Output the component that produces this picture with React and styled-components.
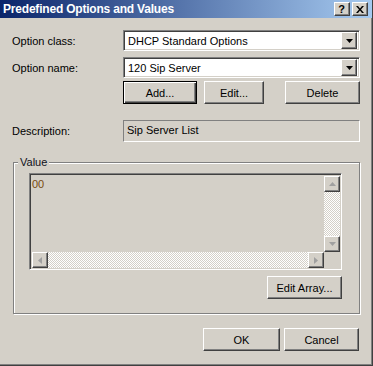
import React from 'react'
import styled, { createGlobalStyle } from 'styled-components'

const GlobalStyle = createGlobalStyle`
    html, body {
        margin: 0;
        padding: 0;
        background: #d4d0c8;
    }
    * {
        box-sizing: border-box;
    }
`

const App = () => {
    return (
        <Window>
            <GlobalStyle />
            <TitleBar>
                <Title>Predefined Options and Values</Title>
                <CaptionButtons>
                    <CaptionButton>?</CaptionButton>
                    <CaptionButton>
                        <svg width="8" height="7" viewBox="0 0 8 7">
                            <path d="M0 0h2l2 2.5L6 0h2L5 3.5 8 7H6L4 4.5 2 7H0l3-3.5z" fill="#000" />
                        </svg>
                    </CaptionButton>
                </CaptionButtons>
            </TitleBar>
            <Body>
                <Form>
                    <Label>Option class:</Label>
                    <Combo>
                        <ComboText>DHCP Standard Options</ComboText>
                        <DropButton><DownArrow /></DropButton>
                    </Combo>
                    <Label>Option name:</Label>
                    <Combo>
                        <ComboText>120 Sip Server</ComboText>
                        <DropButton><DownArrow /></DropButton>
                    </Combo>
                    <span />
                    <ButtonRow>
                        <Button $default $width={74}>Add...</Button>
                        <Button $width={60}>Edit...</Button>
                        <Button $width={75} $push>Delete</Button>
                    </ButtonRow>
                </Form>
                <DescriptionRow>
                    <Label>Description:</Label>
                    <ReadOnlyField>Sip Server List</ReadOnlyField>
                </DescriptionRow>
                <Group>
                    <Legend>Value</Legend>
                    <ValueBox>
                        <ValueText>00</ValueText>
                        <VScroll>
                            <ScrollButton><Arrow $dir="up" /></ScrollButton>
                            <Track />
                            <ScrollButton><Arrow $dir="down" /></ScrollButton>
                        </VScroll>
                        <HScroll>
                            <ScrollButton><Arrow $dir="left" /></ScrollButton>
                            <Track />
                            <ScrollButton><Arrow $dir="right" /></ScrollButton>
                        </HScroll>
                        <Corner />
                    </ValueBox>
                    <GroupFooter>
                        <Button $width={75}>Edit Array...</Button>
                    </GroupFooter>
                </Group>
                <Footer>
                    <Button $width={77}>OK</Button>
                    <Button $width={75}>Cancel</Button>
                </Footer>
            </Body>
        </Window>
    )
}

const DownArrow = () => (
    <svg width="7" height="4" viewBox="0 0 7 4">
        <path d="M0 0h7L3.5 4z" fill="#000" />
    </svg>
)

const arrowPaths = {
    up: 'M0 4h7L3.5 0z',
    down: 'M0 0h7L3.5 4z',
    left: 'M4 0v7L0 3.5z',
    right: 'M0 0v7L4 3.5z',
}

const Arrow = ({ $dir }) => {
    const vertical = $dir === 'up' || $dir === 'down'
    return (
        <svg width={vertical ? 7 : 4} height={vertical ? 4 : 7} viewBox={vertical ? '0 0 7 4' : '0 0 4 7'}>
            <path d={arrowPaths[$dir]} fill="#a0a0a0" />
        </svg>
    )
}

const Window = styled.div`
    width: 373px;
    height: 366px;
    display: flex;
    flex-direction: column;
    background: #d4d0c8;
    border-right: 1px solid #404040;
    border-bottom: 1px solid #404040;
    box-shadow: inset -1px -1px 0 #808080;
    font-family: "Liberation Sans", Arial, sans-serif;
    font-size: 11px;
    color: #000;
`

const TitleBar = styled.div`
    height: 18px;
    display: flex;
    align-items: center;
    justify-content: space-between;
    padding: 0 4px 0 3px;
    background: linear-gradient(to right, #0a246a, #a6caf0);
`

const Title = styled.span`
    color: #fff;
    font-weight: bold;
    font-size: 12px;
    letter-spacing: -0.2px;
`

const CaptionButtons = styled.div`
    display: flex;
    gap: 2px;
`

const raised = `
    background: #d4d0c8;
    border-top: 1px solid #fff;
    border-left: 1px solid #fff;
    border-right: 1px solid #404040;
    border-bottom: 1px solid #404040;
    box-shadow: inset -1px -1px 0 #808080;
`

const CaptionButton = styled.div`
    ${raised}
    width: 16px;
    height: 14px;
    display: flex;
    align-items: center;
    justify-content: center;
    font-weight: bold;
    font-size: 11px;
    padding-right: 1px;
`

const Body = styled.div`
    flex: 1;
    display: flex;
    flex-direction: column;
    padding: 12px 13px 0 12px;
`

const Form = styled.div`
    display: grid;
    grid-template-columns: 111px 237px;
    row-gap: 6px;
    align-items: center;
`

const Label = styled.span`
    white-space: nowrap;
`

const sunken = `
    border-top: 1px solid #808080;
    border-left: 1px solid #808080;
    border-right: 1px solid #fff;
    border-bottom: 1px solid #fff;
    box-shadow: inset 1px 1px 0 #404040, inset -1px -1px 0 #d4d0c8;
`

const Combo = styled.div`
    ${sunken}
    height: 21px;
    background: #fff;
    display: flex;
    align-items: center;
    padding: 2px;
`

const ComboText = styled.span`
    flex: 1;
    padding-left: 2px;
`

const DropButton = styled.div`
    ${raised}
    width: 16px;
    height: 17px;
    display: flex;
    align-items: center;
    justify-content: center;
`

const ButtonRow = styled.div`
    display: flex;
    gap: 7px;
    margin-top: -3px;
`

const Button = styled.div`
    ${raised}
    width: ${p => p.$width}px;
    height: 23px;
    display: flex;
    align-items: center;
    justify-content: center;
    ${p => p.$push && 'margin-left: auto;'}
    ${p => p.$default && `
        outline: 1px solid #000;
        outline-offset: -1px;
        border-top-color: #000;
        border-left-color: #000;
        box-shadow: inset 1px 1px 0 #fff, inset -1px -1px 0 #404040, inset -2px -2px 0 #808080;
    `}
`

const DescriptionRow = styled.div`
    display: grid;
    grid-template-columns: 111px 237px;
    align-items: center;
    margin-top: 16px;
`

const ReadOnlyField = styled.div`
    height: 22px;
    border-top: 1px solid #808080;
    border-left: 1px solid #808080;
    border-right: 1px solid #fff;
    border-bottom: 1px solid #fff;
    padding: 3px 0 0 3px;
`

const Group = styled.fieldset`
    margin: 14px 0 0 1px;
    width: 347px;
    height: 158px;
    border: 1px solid #808080;
    box-shadow: 1px 1px 0 #fff, inset 1px 1px 0 #fff;
    padding: 4px 17px 0 15px;
    display: flex;
    flex-direction: column;
`

const Legend = styled.legend`
    margin-left: -11px;
    padding: 0 2px;
    background: #d4d0c8;
    color: #101020;
    line-height: 13px;
`

const ValueBox = styled.div`
    ${sunken}
    height: 97px;
    display: grid;
    grid-template-columns: 1fr 16px;
    grid-template-rows: 1fr 16px;
    padding: 2px 1px 1px 2px;
`

const ValueText = styled.div`
    color: #7a4a10;
    padding: 2px 0 0 0;
`

const VScroll = styled.div`
    grid-row: 1;
    grid-column: 2;
    display: flex;
    flex-direction: column;
`

const HScroll = styled.div`
    grid-row: 2;
    grid-column: 1;
    display: flex;
`

const ScrollButton = styled.div`
    ${raised}
    width: 16px;
    height: 16px;
    flex: none;
    display: flex;
    align-items: center;
    justify-content: center;
`

const Track = styled.div`
    flex: 1;
    background: repeating-conic-gradient(#fff 0 25%, #d4d0c8 0 50%) 0 0 / 2px 2px;
`

const Corner = styled.div`
    background: #d4d0c8;
`

const GroupFooter = styled.div`
    display: flex;
    justify-content: flex-end;
    margin-top: 6px;
`

const Footer = styled.div`
    display: flex;
    justify-content: flex-end;
    gap: 4px;
    margin-top: 14px;
`

export default App
